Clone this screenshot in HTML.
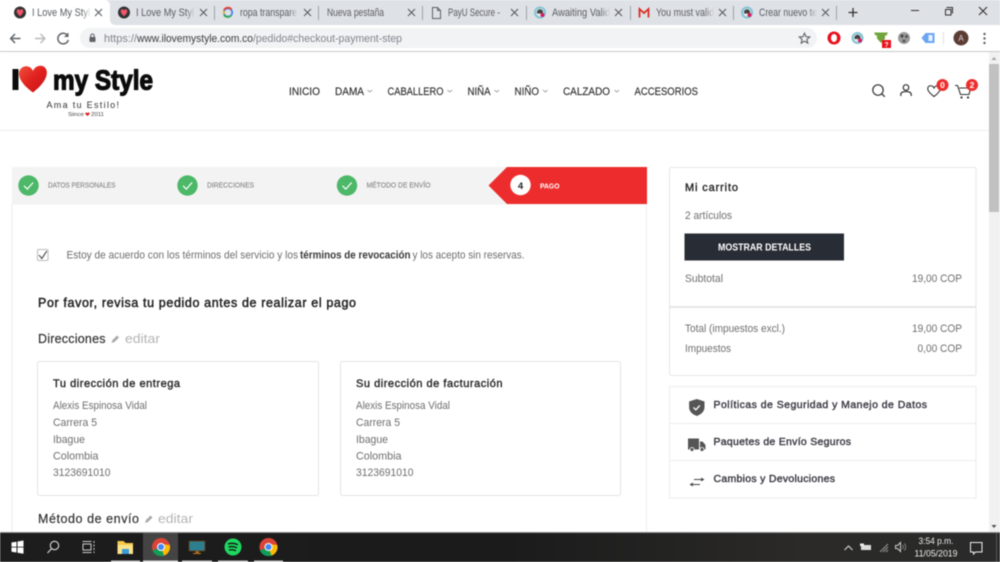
<!DOCTYPE html>
<html lang="es"><head><meta charset="utf-8"><title>I Love My Style</title>
<style>
html,body{margin:0;padding:0;background:#fff;width:1000px;height:562px;overflow:hidden}
svg{display:block;filter:blur(.45px)}
text{font-family:"Liberation Sans",sans-serif}
.tab{font-size:11px;fill:#5a5d62}
.nav{font-size:11px;fill:#2e2e2e;stroke:#2e2e2e;stroke-width:.15}
.st{font-size:7px;fill:#8c8c8c;stroke:#8c8c8c;stroke-width:.15}
.b{font-size:11px;fill:#6e6e6e}
.h{font-size:12.500px;fill:#333;stroke:#333;stroke-width:.2}
.ti{font-size:11px;fill:#2b2b2b;stroke:#2b2b2b;stroke-width:.4}
.li{font-size:10.500px;fill:#3a3a44;stroke:#3a3a44;stroke-width:.4}
.x{stroke:#5f6368;stroke-width:1.200;fill:none}
.ch{stroke:#888;stroke-width:.8;fill:none}
</style></head><body>
<svg width="1000" height="562" viewBox="0 0 1000 562" xmlns="http://www.w3.org/2000/svg">
<defs>
<linearGradient id="fd"><stop offset="0" stop-color="#dee1e6" stop-opacity="0"/><stop offset="1" stop-color="#dee1e6"/></linearGradient>
<linearGradient id="fw"><stop offset="0" stop-color="#fff" stop-opacity="0"/><stop offset="1" stop-color="#fff"/></linearGradient>
<linearGradient id="hg" x1="0" y1="0" x2="1" y2="1"><stop offset="0" stop-color="#f0503c"/><stop offset=".5" stop-color="#e0201e"/><stop offset="1" stop-color="#c41616"/></linearGradient>
<linearGradient id="tb"><stop offset="0" stop-color="#1d1d1d"/><stop offset=".5" stop-color="#1b1b1b"/><stop offset=".8" stop-color="#2b2a29"/><stop offset="1" stop-color="#2a2a2a"/></linearGradient>
<g id="cr"><circle r="9" fill="#db4437"/><path d="M0 0L-8.500 3.500A9 9 0 0 0 3 8.600Z" fill="#0f9d58"/><path d="M0 0L3 8.600A9 9 0 0 0 8.800-2L0-3Z" fill="#fbbc05"/><circle r="4" fill="#fff"/><circle r="3" fill="#4285f4"/></g>
<g id="fav"><circle r="6" fill="#333"/><path d="M0 3.600C-5-.2-3.200-3.400-1.600-3.200-.8-3.100-.2-2.600 0-2 .2-2.600.8-3.100 1.600-3.200 3.200-3.400 5-.2 0 3.600Z" fill="#f0566a"/></g>
<g id="pr"><circle r="6" fill="#7fc4d6"/><circle r="4" fill="#e8e8e8"/><path d="M-3-1C-2-4 2-4 3-1L3 1-3 1Z" fill="#444"/><circle cx="2.500" cy="2.500" r="2" fill="#d81b60"/></g>
<g id="chk"><circle r="10.200" fill="#4cb868"/><path d="M-4.500 .3L-1.200 3.600 4.600-3" fill="none" stroke="#fff" stroke-width="1.200"/></g>
<path id="pen" d="M0 7L1 4 5.500-.5 7.500 1.500 3 6Z" fill="#aaa"/>
</defs>

<!-- tab strip -->
<rect width="1000" height="25" fill="#dee1e6"/>
<path d="M0 25V0H104Q110 0 110 6V19Q110 25 116 25Z" fill="#fff"/>
<use href="#fav" x="20" y="12.500"/>
<text class="tab" x="32" y="16" textLength="58" lengthAdjust="spacingAndGlyphs">I Love My Styl</text>
<rect x="82" y="3" width="9" height="20" fill="url(#fw)"/>
<path class="x" d="M95 9l7 7M102 9l-7 7"/>
<use href="#fav" x="124" y="12.500"/>
<text class="tab" x="136" y="16" textLength="58" lengthAdjust="spacingAndGlyphs">I Love My Styl</text>
<rect x="186" y="3" width="9" height="20" fill="url(#fd)"/>
<path class="x" d="M200 9l7 7M207 9l-7 7"/>
<rect x="214" y="6" width="1" height="14" fill="#9fa2a7"/>
<circle cx="228" cy="12.500" r="4.200" fill="none" stroke="#4285f4" stroke-width="1.800"/>
<path d="M224 10a4.500 4.500 0 0 1 7.500-.6" fill="none" stroke="#ea4335" stroke-width="1.800"/>
<path d="M224 15a4.500 4.500 0 0 0 7 .5" fill="none" stroke="#34a853" stroke-width="1.800"/>
<path d="M223.900 11a4.500 4.500 0 0 0 0 3" fill="none" stroke="#fbbc05" stroke-width="1.800"/>
<text class="tab" x="240" y="16" textLength="57" lengthAdjust="spacingAndGlyphs">ropa transpare</text>
<rect x="289" y="3" width="9" height="20" fill="url(#fd)"/>
<path class="x" d="M304 9l7 7M311 9l-7 7"/>
<rect x="318" y="6" width="1" height="14" fill="#9fa2a7"/>
<text class="tab" x="327" y="16" textLength="57" lengthAdjust="spacingAndGlyphs">Nueva pestaña</text>
<path class="x" d="M408 9l7 7M415 9l-7 7"/>
<rect x="422" y="6" width="1" height="14" fill="#9fa2a7"/>
<path d="M432.500 7.500h5l3 3v8h-8Z M437.500 7.500v3h3" fill="none" stroke="#5f6368"/>
<text class="tab" x="448" y="16" textLength="52" lengthAdjust="spacingAndGlyphs">PayU Secure -</text>
<path class="x" d="M511 9l7 7M518 9l-7 7"/>
<rect x="526" y="6" width="1" height="14" fill="#9fa2a7"/>
<use href="#pr" x="540" y="12.500"/>
<text class="tab" x="552" y="16" textLength="58" lengthAdjust="spacingAndGlyphs">Awaiting Valid</text>
<rect x="601" y="3" width="9" height="20" fill="url(#fd)"/>
<path class="x" d="M615 9l7 7M622 9l-7 7"/>
<rect x="630" y="6" width="1" height="14" fill="#9fa2a7"/>
<path d="M639.500 17.500V9L644 13 648.500 9V17.500" fill="none" stroke="#d93025" stroke-width="1.800"/>
<text class="tab" x="656" y="16" textLength="58" lengthAdjust="spacingAndGlyphs">You must valid</text>
<rect x="705" y="3" width="9" height="20" fill="url(#fd)"/>
<path class="x" d="M719 9l7 7M726 9l-7 7"/>
<rect x="733" y="6" width="1" height="14" fill="#9fa2a7"/>
<use href="#pr" x="747" y="12.500"/>
<text class="tab" x="759" y="16" textLength="58" lengthAdjust="spacingAndGlyphs">Crear nuevo te</text>
<rect x="808" y="3" width="9" height="20" fill="url(#fd)"/>
<path class="x" d="M822 9l7 7M829 9l-7 7"/>
<rect x="836" y="6" width="1" height="14" fill="#9fa2a7"/>
<path d="M848.500 12.500h9M853 8v9" stroke="#333" stroke-width="1.300" fill="none"/>
<path d="M911 10.500h8" stroke="#333"/>
<path d="M946.500 7.500h6v6M945.500 9.500h5.500v5.500h-5.500Z" fill="none" stroke="#333"/>
<path d="M979 7l8 8M987 7l-8 8" stroke="#333" stroke-width="1.100"/>

<!-- toolbar -->
<rect y="25" width="1000" height="26" fill="#fff"/>
<rect x="80" y="28" width="737" height="20" rx="10" fill="#f1f3f4"/>
<rect y="51" width="1000" height="1" fill="#c8c8c8"/>
<path d="M20.500 38.500H11M15 34l-4.300 4.500L15 43" fill="none" stroke="#5f6368" stroke-width="1.500"/>
<path d="M35 38.500H44.500M40.500 34l4.300 4.500L40.500 43" fill="none" stroke="#b8babd" stroke-width="1.500"/>
<path d="M67.500 35.500A5.300 5.300 0 1 0 68.300 40" fill="none" stroke="#5f6368" stroke-width="1.500"/><path d="M68.500 32.500v4.500h-4.500Z" fill="#5f6368"/>
<rect x="89.500" y="37" width="6" height="5" rx=".7" fill="#5f6368"/><path d="M90.800 37v-1.300a1.700 1.700 0 0 1 3.400 0V37" fill="none" stroke="#5f6368"/>
<text x="104" y="42" font-size="11" fill="#80868b" textLength="33" lengthAdjust="spacingAndGlyphs">https://</text>
<text x="137" y="42" font-size="11" fill="#3a3c3f" textLength="116" lengthAdjust="spacingAndGlyphs">www.ilovemystyle.com.co</text>
<text x="253" y="42" font-size="11" fill="#80868b" textLength="149" lengthAdjust="spacingAndGlyphs">/pedido#checkout-payment-step</text>
<path d="M804.500 33.200l1.500 3.500 3.700.3-2.800 2.400.9 3.700-3.300-2-3.300 2 .9-3.700-2.800-2.400 3.700-.3Z" fill="none" stroke="#5f6368" stroke-width="1.100"/>
<circle cx="834" cy="38" r="6.500" fill="#e8101c"/><ellipse cx="834" cy="38" rx="3" ry="4" fill="#fff"/>
<use href="#pr" x="857.500" y="38"/>
<path d="M874 32.500h14l-1.500 3h-1.500v3l-4 4.500-4-4.500v-3h-1.500Z" fill="#6fa53a"/>
<rect x="882" y="40" width="9" height="8" fill="#e8101c"/><text x="886.500" y="47" font-size="7" font-weight="700" fill="#fff" text-anchor="middle">?</text>
<circle cx="904" cy="38" r="6" fill="#9a9a9a"/><circle cx="902" cy="36" r="1.500" fill="#444"/><circle cx="906.500" cy="36.500" r="1.500" fill="#555"/><circle cx="904" cy="41" r="1.500" fill="#555"/>
<path d="M921.500 38l4-5h9v10h-9Z" fill="#6aa6f2"/><rect x="928.500" y="35" width="4" height="6" fill="#e8f1fd"/>
<rect x="943" y="32" width="1" height="12" fill="#e0e0e0"/>
<circle cx="961" cy="38" r="7.500" fill="#5c3d33"/><text x="961" y="41" font-size="8" fill="#ddd" text-anchor="middle">A</text>
<circle cx="984.500" cy="34" r="1.200" fill="#5f6368"/><circle cx="984.500" cy="38.500" r="1.200" fill="#5f6368"/><circle cx="984.500" cy="43" r="1.200" fill="#5f6368"/>

<!-- scrollbar -->
<rect x="989" y="52" width="11" height="480" fill="#f1f1f1"/>
<rect x="989" y="64" width="10" height="148" fill="#c1c1c1"/>
<path d="M991.500 60l2.500-3 2.500 3Z" fill="#a3a3a3"/>
<path d="M991.500 525l2.500 3 2.500-3Z" fill="#505050"/>

<!-- logo -->
<rect x="12.500" y="69" width="6" height="21" fill="#0b0b0b"/>
<path d="M33 92.500C17 81 17.500 72 21 68.500 25 64.500 31 66 33 71 35 65.500 43 63.500 46 69 49 75 44 84 33 92.500Z" fill="url(#hg)"/>
<text x="53" y="89.500" font-size="28" font-weight="700" fill="#0b0b0b" stroke="#0b0b0b" stroke-width="1.200" textLength="100" lengthAdjust="spacingAndGlyphs">my Style</text>
<text x="46.500" y="108" font-size="9" fill="#333" textLength="72.500">Ama tu Estilo!</text>
<text x="68" y="116" font-size="5.500" fill="#444" textLength="16" lengthAdjust="spacingAndGlyphs">Since</text>
<path d="M87.500 116c-3-2-2.300-3.500-1.300-3.500.6 0 1 .3 1.300.8.300-.5.700-.8 1.300-.8 1 0 1.700 1.500-1.300 3.500Z" fill="#e0201e"/>
<text x="91" y="116" font-size="5.500" fill="#444" textLength="13" lengthAdjust="spacingAndGlyphs">2011</text>

<!-- nav -->
<text class="nav" x="289" y="95" textLength="31" lengthAdjust="spacingAndGlyphs">INICIO</text>
<text class="nav" x="335" y="95" textLength="29" lengthAdjust="spacingAndGlyphs">DAMA</text>
<path class="ch" d="M367.500 90l2.300 2 2.300-2"/>
<text class="nav" x="387.500" y="95" textLength="56" lengthAdjust="spacingAndGlyphs">CABALLERO</text>
<path class="ch" d="M447.500 90l2.300 2 2.300-2"/>
<text class="nav" x="467.500" y="95" textLength="23" lengthAdjust="spacingAndGlyphs">NIÑA</text>
<path class="ch" d="M494.500 90l2.300 2 2.300-2"/>
<text class="nav" x="514.500" y="95" textLength="24.500" lengthAdjust="spacingAndGlyphs">NIÑO</text>
<path class="ch" d="M543 90l2.300 2 2.300-2"/>
<text class="nav" x="563" y="95" textLength="47" lengthAdjust="spacingAndGlyphs">CALZADO</text>
<path class="ch" d="M614.500 90l2.300 2 2.300-2"/>
<text class="nav" x="634.500" y="95" textLength="63.500" lengthAdjust="spacingAndGlyphs">ACCESORIOS</text>

<!-- header icons -->
<circle cx="878" cy="90" r="5.200" fill="none" stroke="#333" stroke-width="1.200"/><path d="M881.800 93.800l3 3" stroke="#333" stroke-width="1.300"/>
<circle cx="906" cy="87.500" r="2.800" fill="none" stroke="#333" stroke-width="1.200"/><path d="M900.800 96v-1.500c0-2 2-3 5.200-3s5.200 1 5.200 3V96" fill="none" stroke="#333" stroke-width="1.200"/>
<path d="M934 96.500C928 92 927.500 89.500 927.800 88 928.500 85 932.500 85 934 88 935.500 85 939.500 85 940.200 88 940.500 89.500 940 92 934 96.500Z" fill="#fff" stroke="#333" stroke-width="1.100"/>
<circle cx="942.500" cy="85" r="6" fill="#ed2d2d"/><text x="942.500" y="88" font-size="8.500" font-weight="700" fill="#fff" text-anchor="middle">0</text>
<path d="M955 85.500h2.500l3 9h8.500l1.700-6.500h-11.500" fill="none" stroke="#333" stroke-width="1.100"/><circle cx="961.500" cy="97.500" r="1.100" fill="#333"/><circle cx="968" cy="97.500" r="1.100" fill="#333"/>
<circle cx="972" cy="85" r="6" fill="#ed2d2d"/><text x="972" y="88" font-size="8.500" font-weight="700" fill="#fff" text-anchor="middle">2</text>
<rect y="130" width="989" height="1" fill="#ececec"/>

<!-- stepper -->
<rect x="12" y="204" width="634.500" height="340" fill="#fff" stroke="#eee"/>
<rect x="12" y="167" width="635" height="37" fill="#f3f3f3"/>
<path d="M507 167H647V204H507L488.500 185.500Z" fill="#ed2d2d"/>
<use href="#chk" x="28.500" y="185.500"/><use href="#chk" x="187.500" y="185.500"/><use href="#chk" x="347" y="185.500"/>
<text class="st" x="48" y="187.500" textLength="67.500" lengthAdjust="spacingAndGlyphs">DATOS PERSONALES</text>
<text class="st" x="207" y="187.500" textLength="47" lengthAdjust="spacingAndGlyphs">DIRECCIONES</text>
<text class="st" x="366.500" y="187.500" textLength="64" lengthAdjust="spacingAndGlyphs">MÉTODO DE ENVÍO</text>
<circle cx="520.500" cy="185" r="10.200" fill="#fff"/>
<text x="520.500" y="189" font-size="9.500" font-weight="700" fill="#222" text-anchor="middle">4</text>
<text x="540" y="188.500" font-size="7" font-weight="700" fill="#fff" textLength="19.500" lengthAdjust="spacingAndGlyphs">PAGO</text>

<!-- main -->
<rect x="37.500" y="249.500" width="10.500" height="11" rx="1" fill="#fff" stroke="#bbb"/>
<path d="M39 255l2.800 3.500 5-7.500" fill="none" stroke="#333" stroke-width="1"/>
<text class="b" x="66.500" y="258.500" textLength="231.500" lengthAdjust="spacingAndGlyphs">Estoy de acuerdo con los términos del servicio y los</text>
<text x="300" y="258.500" font-size="11" font-weight="700" fill="#3a3a3a" textLength="110.500" lengthAdjust="spacingAndGlyphs">términos de revocación</text>
<text class="b" x="412.500" y="258.500" textLength="112" lengthAdjust="spacingAndGlyphs">y los acepto sin reservas.</text>
<text x="38" y="307" font-size="12.500" fill="#222" stroke="#222" stroke-width=".45" textLength="318">Por favor, revisa tu pedido antes de realizar el pago</text>
<text class="h" x="38" y="343" textLength="67.500">Direcciones</text>
<use href="#pen" x="111.500" y="336"/>
<text x="125" y="343" font-size="13" fill="#b4b4b4" textLength="35" lengthAdjust="spacingAndGlyphs">editar</text>

<rect x="37.500" y="361.500" width="281" height="134" rx="2" fill="#fff" stroke="#e4e4e4"/>
<rect x="340.500" y="361.500" width="280" height="134" rx="2" fill="#fff" stroke="#e4e4e4"/>
<text class="ti" x="53" y="387" textLength="127">Tu dirección de entrega</text>
<text class="ti" x="356" y="387" textLength="146.500">Su dirección de facturación</text>
<text class="b" x="53" y="409" textLength="94" lengthAdjust="spacingAndGlyphs">Alexis Espinosa Vidal</text>
<text class="b" x="53" y="426" textLength="44" lengthAdjust="spacingAndGlyphs">Carrera 5</text>
<text class="b" x="53" y="443" textLength="32" lengthAdjust="spacingAndGlyphs">Ibague</text>
<text class="b" x="53" y="459.500" textLength="45.500" lengthAdjust="spacingAndGlyphs">Colombia</text>
<text class="b" x="53" y="476" textLength="57.500" lengthAdjust="spacingAndGlyphs">3123691010</text>
<text class="b" x="356" y="409" textLength="94" lengthAdjust="spacingAndGlyphs">Alexis Espinosa Vidal</text>
<text class="b" x="356" y="426" textLength="44" lengthAdjust="spacingAndGlyphs">Carrera 5</text>
<text class="b" x="356" y="443" textLength="32" lengthAdjust="spacingAndGlyphs">Ibague</text>
<text class="b" x="356" y="459.500" textLength="45.500" lengthAdjust="spacingAndGlyphs">Colombia</text>
<text class="b" x="356" y="476" textLength="57.500" lengthAdjust="spacingAndGlyphs">3123691010</text>
<text class="h" x="38" y="523" textLength="101">Método de envío</text>
<use href="#pen" x="145" y="516"/>
<text x="158" y="523" font-size="13" fill="#b4b4b4" textLength="35" lengthAdjust="spacingAndGlyphs">editar</text>

<!-- cart -->
<rect x="669.500" y="167.500" width="306.500" height="208" rx="2" fill="#fff" stroke="#e6e6e6"/>
<text x="685" y="191" font-size="11" fill="#2b2b2b" stroke="#2b2b2b" stroke-width=".4" textLength="53">Mi carrito</text>
<text class="b" x="685" y="219" textLength="47" lengthAdjust="spacingAndGlyphs">2 artículos</text>
<rect x="684.500" y="233.500" width="159.500" height="27" fill="#282c35"/>
<text x="718" y="250.500" font-size="10" font-weight="700" fill="#fff" textLength="93" lengthAdjust="spacingAndGlyphs">MOSTRAR DETALLES</text>
<text class="b" x="685" y="282" textLength="38" lengthAdjust="spacingAndGlyphs">Subtotal</text>
<text class="b" x="912" y="282" textLength="50" lengthAdjust="spacingAndGlyphs">19,00 COP</text>
<rect x="670" y="306" width="306" height="2" fill="#e6e6e6"/>
<text class="b" x="685" y="332" textLength="100" lengthAdjust="spacingAndGlyphs">Total (impuestos excl.)</text>
<text class="b" x="912" y="332" textLength="50" lengthAdjust="spacingAndGlyphs">19,00 COP</text>
<text class="b" x="685" y="352" textLength="46" lengthAdjust="spacingAndGlyphs">Impuestos</text>
<text class="b" x="917.500" y="352" textLength="44.500" lengthAdjust="spacingAndGlyphs">0,00 COP</text>

<!-- reassurance -->
<rect x="669.500" y="386.500" width="306.500" height="111.500" fill="#fff" stroke="#ececec"/>
<rect x="670" y="423" width="306" height="1" fill="#ececec"/>
<rect x="670" y="460" width="306" height="1" fill="#ececec"/>
<path d="M696.800 399l7.700 2.500v5.500c0 4.500-3.200 7.300-7.700 9-4.500-1.700-7.700-4.500-7.700-9V401.500Z" fill="#555"/>
<path d="M693.500 407.500l2.300 2.300 4-4.300" fill="none" stroke="#fff" stroke-width="1.300"/>
<path d="M688 438.500h11v11h-11Z M700 441.500h2.500l3 3.500v4.500h-5.500Z" fill="#555"/>
<circle cx="692" cy="449.500" r="2" fill="#555" stroke="#fff" stroke-width=".8"/><circle cx="702" cy="449.500" r="2" fill="#555" stroke="#fff" stroke-width=".8"/>
<path d="M694 479.500h9M701 478l2.500 1.500-2.500 1.500M700 484.500H691M693 483l-2.500 1.500 2.500 1.500" fill="none" stroke="#444" stroke-width="1"/>
<text class="li" x="713.500" y="408" textLength="213.500">Políticas de Seguridad y Manejo de Datos</text>
<text class="li" x="713.500" y="445" textLength="137.500">Paquetes de Envío Seguros</text>
<text class="li" x="713.500" y="482" textLength="121.500">Cambios y Devoluciones</text>

<!-- taskbar -->
<rect y="532" width="1000" height="30" fill="url(#tb)"/>
<rect y="532" width="1000" height="1" fill="#8a8a8a"/>
<rect x="143" y="533" width="35" height="29" fill="#444"/>
<path d="M11.500 542.500l5-.8v5h-5ZM17.500 541.500l6-1v6.200h-6ZM11.500 547.500h5v5l-5-.8ZM17.500 547.500h6v6.200l-6-1Z" fill="#fff"/>
<circle cx="54.500" cy="545.500" r="4.200" fill="none" stroke="#ddd" stroke-width="1.100"/><path d="M51.500 548.700l-4 4.300" stroke="#ddd" stroke-width="1.100"/>
<path d="M82.500 541.500h9M82.500 552.500h9" stroke="#ccc" stroke-width="1.100"/><rect x="83" y="544" width="8" height="6" fill="none" stroke="#ccc"/><path d="M94 541v12" stroke="#ccc" stroke-dasharray="2 1.500"/>
<path d="M117.500 541h6l2 2h7.500v11h-15.500Z" fill="#f6c94c"/><rect x="117.500" y="545" width="15.500" height="9" fill="#fbe38a"/><rect x="122" y="549" width="7" height="5" fill="#3a9bdc"/>
<use href="#cr" x="161" y="547"/><use href="#cr" x="268.500" y="547"/>
<rect x="189" y="541" width="16" height="10" rx="1" fill="#2d7f8f" stroke="#5a3a1a"/><rect x="195.500" y="551" width="3.500" height="2" fill="#a8621c"/><rect x="193" y="553" width="8" height="1" fill="#c07820"/>
<circle cx="233" cy="547" r="8.500" fill="#1ed760"/>
<path d="M228 544c3-1 7-.8 10 .8M228.500 547c3-.8 6-.5 8.500.8M229 550c2.500-.5 5-.3 7 .8" fill="none" stroke="#111" stroke-width="1.300"/>
<rect x="111" y="560.500" width="29" height="1.500" fill="#ccc"/><rect x="143" y="560.500" width="35" height="1.500" fill="#ddd"/><rect x="182" y="560.500" width="30" height="1.500" fill="#ccc"/><rect x="218" y="560.500" width="30" height="1.500" fill="#ccc"/><rect x="254" y="560.500" width="29" height="1.500" fill="#ccc"/>
<path d="M844.500 550l4-4 4 4" fill="none" stroke="#ddd" stroke-width="1"/>
<rect x="861" y="545" width="10" height="5" fill="#ddd"/><rect x="860" y="543.500" width="4" height="2.500" fill="#eee"/>
<path d="M880 552l8-8M883 552l5-5M886 552l2-2" stroke="#999" stroke-width="1"/>
<path d="M895.500 545.500h2l3-3v9l-3-3h-2Z" fill="none" stroke="#ccc"/><path d="M902.500 545a3 3 0 0 1 0 4M904.500 543.500a6 6 0 0 1 0 7" fill="none" stroke="#888"/>
<text x="918.500" y="544" font-size="9" fill="#eee" textLength="35" lengthAdjust="spacingAndGlyphs">3:54 p.m.</text>
<text x="914.500" y="556.500" font-size="9" fill="#eee" textLength="43" lengthAdjust="spacingAndGlyphs">11/05/2019</text>
<path d="M970.500 542.500h11.500v9.500h-6.500l-2 2v-2h-3Z" fill="none" stroke="#eee"/>
<rect x="996" y="533" width="1" height="29" fill="#555"/>
</svg>
</body></html>
